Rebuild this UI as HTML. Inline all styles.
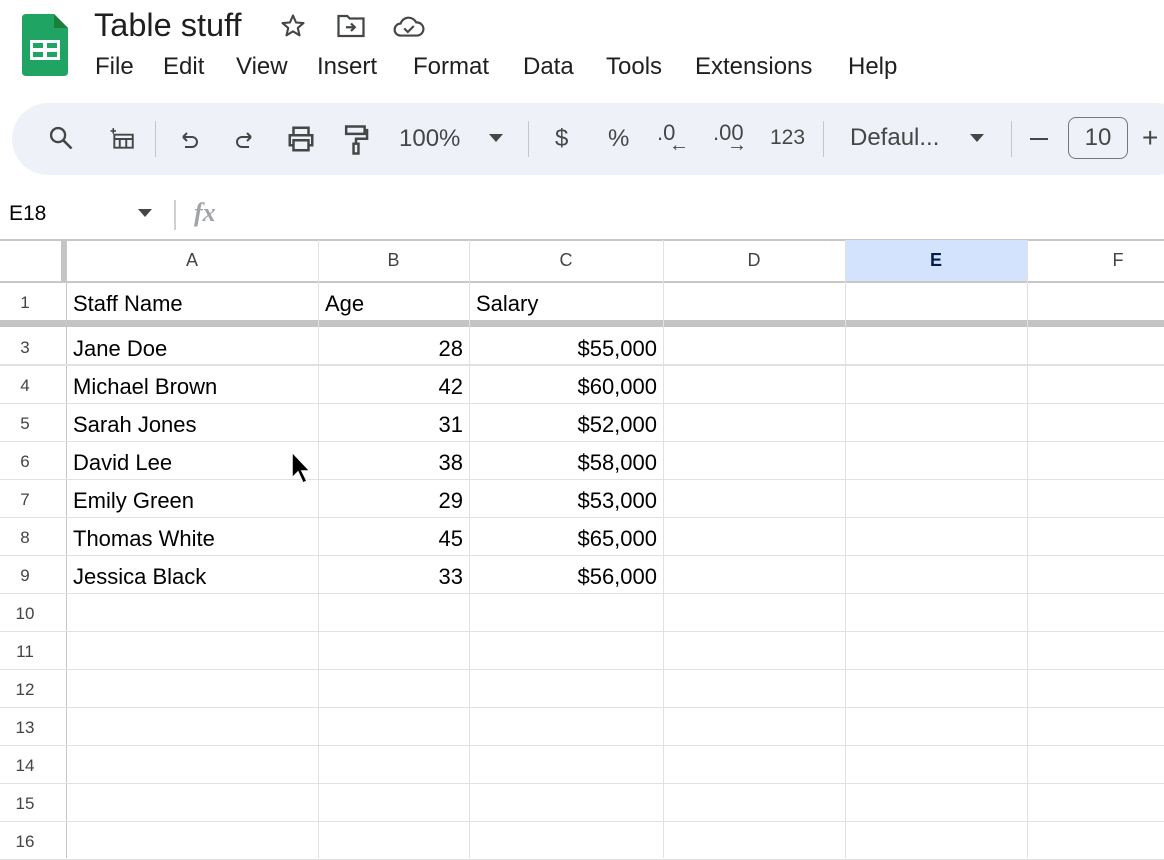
<!DOCTYPE html>
<html><head><style>
*{margin:0;padding:0;box-sizing:border-box}
body{width:1164px;height:858px;overflow:hidden;background:#fff;font-family:"Liberation Sans",Arial,sans-serif;position:relative;color:#1f1f1f}
.a{position:absolute}
.menu span{position:absolute;top:53px;font-size:24px;color:#1f1f1f}
.tb{position:absolute;left:12px;top:103px;width:1180px;height:72px;background:#eef2f8;border-radius:36px}
.ti{position:absolute;color:#444746;font-size:24px}
.sep{position:absolute;top:121px;width:1px;height:36px;background:#c4c7c5}
.gl{position:absolute;background:#e1e1e1}
.cell{position:absolute;font-size:22px;color:#000}
.rn{position:absolute;left:0;width:50px;text-align:center;font-size:17px;color:#444}
.ch{position:absolute;top:250px;font-size:18px;color:#444;text-align:center}
</style></head><body>
<svg class="a" style="left:22px;top:14px" width="46" height="62" viewBox="0 0 46 62">
<path d="M4 0H32L46 14V58Q46 62 42 62H4Q0 62 0 58V4Q0 0 4 0Z" fill="#1fa463"/>
<path d="M32 0V14H46Z" fill="#188038"/>
<rect x="8" y="26" width="30" height="20" fill="#fff"/>
<rect x="11" y="29" width="10" height="5" fill="#1fa463"/><rect x="25" y="29" width="10" height="5" fill="#1fa463"/>
<rect x="11" y="38" width="10" height="5" fill="#1fa463"/><rect x="25" y="38" width="10" height="5" fill="#1fa463"/>
</svg>
<div class="a" style="left:94px;top:7px;font-size:32.5px;color:#1f1f1f">Table stuff</div>
<svg class="a" style="left:279px;top:12px" width="28" height="28" viewBox="0 0 24 24"><path d="M12 3l2.6 6 6.4.5-4.9 4.2 1.5 6.3L12 16.6 6.4 20l1.5-6.3L3 9.5 9.4 9z" fill="none" stroke="#444746" stroke-width="1.8" stroke-linejoin="round"/></svg>
<svg class="a" style="left:336px;top:13px" width="30" height="26" viewBox="0 0 24 20"><path d="M2 2h7l2 2h11v14H2z" fill="none" stroke="#444746" stroke-width="1.8"/><path d="M8 11h7M12 8l3 3-3 3" fill="none" stroke="#444746" stroke-width="1.8"/></svg>
<svg class="a" style="left:392px;top:14px" width="34" height="24" viewBox="0 0 28 20"><path d="M7 18a5 5 0 0 1 0-10 7 7 0 0 1 13-1 5.5 5.5 0 0 1 1 11z" fill="none" stroke="#444746" stroke-width="1.8"/><path d="M10 12l3 3 5-5" fill="none" stroke="#444746" stroke-width="1.8"/></svg>
<div class="menu">
<span style="left:95px">File</span><span style="left:163px">Edit</span><span style="left:236px">View</span><span style="left:317px">Insert</span><span style="left:413px">Format</span><span style="left:523px">Data</span><span style="left:606px">Tools</span><span style="left:695px">Extensions</span><span style="left:848px">Help</span>
</div>
<div class="tb"></div>
<svg class="a" style="left:47px;top:124px" width="28" height="28" viewBox="0 0 24 24"><circle cx="9.5" cy="9.5" r="6" fill="none" stroke="#444746" stroke-width="2"/><path d="M14 14l7 7" stroke="#444746" stroke-width="2.2"/></svg>
<svg class="a" style="left:110px;top:126px" width="26" height="26" viewBox="0 0 24 24"><path d="M4 8h17v12H4zM4 12h17M9 12v8M15 12v8" fill="none" stroke="#444746" stroke-width="1.8"/><path d="M3 2v5M0.5 4.5h5" stroke="#444746" stroke-width="1.5"/></svg>
<div class="sep" style="left:155px"></div>
<svg class="a" style="left:176px;top:128px" width="26" height="24" viewBox="0 0 24 24"><path d="M6 9h9a5 5 0 0 1 0 10H8M6 9l4-4M6 9l4 4" fill="none" stroke="#444746" stroke-width="2"/></svg>
<svg class="a" style="left:232px;top:128px" width="26" height="24" viewBox="0 0 24 24"><path d="M18 9H9a5 5 0 0 0 0 10h7M18 9l-4-4M18 9l-4 4" fill="none" stroke="#444746" stroke-width="2"/></svg>
<svg class="a" style="left:286px;top:124px" width="30" height="30" viewBox="0 0 24 24"><path d="M6 8V3h12v5M6 17H3V9h18v8h-3M6 13h12v8H6z" fill="none" stroke="#444746" stroke-width="2"/></svg>
<svg class="a" style="left:341px;top:124px" width="30" height="32" viewBox="0 0 24 26"><path d="M4 2h15v6H4zM19 5h2v7h-9v4M10 16h4v8h-4z" fill="none" stroke="#444746" stroke-width="2"/></svg>
<div class="ti" style="left:399px;top:125px">100%</div>
<svg class="a" style="left:489px;top:134px" width="14" height="8"><path d="M0 0h14L7 8z" fill="#444746"/></svg>
<div class="sep" style="left:528px"></div>
<div class="ti" style="left:555px;top:125px">$</div>
<div class="ti" style="left:608px;top:125px">%</div>
<div class="ti" style="left:657px;top:120px;font-size:22px">.0</div>
<div class="ti" style="left:669px;top:134px;font-size:20px;font-weight:bold">←</div>
<div class="ti" style="left:713px;top:120px;font-size:22px">.00</div>
<div class="ti" style="left:727px;top:134px;font-size:20px;font-weight:bold">→</div>
<div class="ti" style="left:770px;top:126px;font-size:21px">123</div>
<div class="sep" style="left:823px"></div>
<div class="ti" style="left:850px;top:124px">Defaul...</div>
<svg class="a" style="left:970px;top:134px" width="14" height="8"><path d="M0 0h14L7 8z" fill="#444746"/></svg>
<div class="sep" style="left:1011px"></div>
<div class="a" style="left:1030px;top:138px;width:18px;height:2px;background:#444746"></div>
<div class="a" style="left:1068px;top:117px;width:60px;height:42px;border:1.5px solid #747775;border-radius:8px;font-size:24px;color:#444746;text-align:center;line-height:40px">10</div>
<div class="ti" style="left:1142px;top:122px;font-size:28px">+</div>
<div class="a" style="left:9px;top:202px;font-size:21px;color:#000">E18</div>
<svg class="a" style="left:138px;top:209px" width="14" height="8"><path d="M0 0h14L7 8z" fill="#444746"/></svg>
<div class="a" style="left:174px;top:200px;width:1.5px;height:30px;background:#d0d0d0"></div>
<div class="a" style="left:194px;top:198px;font-size:26px;color:#a0a4a8;font-style:italic;font-weight:600;font-family:'Liberation Serif',serif">fx</div>
<div class="gl" style="left:0;top:239px;width:1164px;height:1.5px;background:#c7c7c7"></div>
<div class="a" style="left:845px;top:240px;width:182px;height:42px;background:#d3e3fd"></div>
<div class="a" style="left:61px;top:240px;width:5px;height:42px;background:#c4c4c4"></div>
<div class="gl" style="left:0;top:281px;width:1164px;height:1.5px;background:#c7c7c7"></div>
<div class="a" style="left:0;top:320px;width:1164px;height:7px;background:#c4c4c4"></div>
<div class="gl" style="left:66px;top:240px;width:1px;height:618px;background:#c7c7c7"></div>
<div class="gl" style="left:318px;top:240px;width:1px;height:618px"></div>
<div class="gl" style="left:469px;top:240px;width:1px;height:618px"></div>
<div class="gl" style="left:663px;top:240px;width:1px;height:618px"></div>
<div class="gl" style="left:845px;top:240px;width:1px;height:618px"></div>
<div class="gl" style="left:1027px;top:240px;width:1px;height:618px"></div>
<div class="ch" style="left:66px;width:252px">A</div>
<div class="ch" style="left:318px;width:151px">B</div>
<div class="ch" style="left:469px;width:194px">C</div>
<div class="ch" style="left:663px;width:182px">D</div>
<div class="ch" style="left:845px;width:182px;font-weight:bold;color:#041e49">E</div>
<div class="ch" style="left:1027px;width:182px">F</div>
<div class="rn" style="top:293px">1</div>
<div class="cell" style="left:73px;top:291px">Staff Name</div>
<div class="cell" style="left:325px;top:291px">Age</div>
<div class="cell" style="left:476px;top:291px">Salary</div>
<div id="rows"></div>
<script>
var d=[["Jane Doe",28,"$55,000"],["Michael Brown",42,"$60,000"],["Sarah Jones",31,"$52,000"],["David Lee",38,"$58,000"],["Emily Green",29,"$53,000"],["Thomas White",45,"$65,000"],["Jessica Black",33,"$56,000"]];
var h="";
for(var i=0;i<14;i++){var y=328+i*38;var n=i+3;
h+='<div class="gl" style="left:0;top:'+(y+37)+'px;width:1164px;height:1px"></div>';
h+='<div class="rn" style="top:'+(y+10)+'px">'+n+'</div>';
if(i<7){h+='<div class="cell" style="left:73px;top:'+(y+8)+'px">'+d[i][0]+'</div>';
h+='<div class="cell" style="left:318px;width:145px;text-align:right;top:'+(y+8)+'px">'+d[i][1]+'</div>';
h+='<div class="cell" style="left:469px;width:188px;text-align:right;top:'+(y+8)+'px">'+d[i][2]+'</div>';}}
document.getElementById("rows").innerHTML=h;
</script>
<div class="gl" style="left:0;top:364px;width:1164px;height:1px"></div>
<svg class="a" style="left:290px;top:450px" width="20" height="36" viewBox="0 0 20 36"><path d="M2 2v26l6-6 5 11 4-2-5-10h8z" fill="#000" stroke="#fff" stroke-width="1.5"/></svg>
</body></html>
